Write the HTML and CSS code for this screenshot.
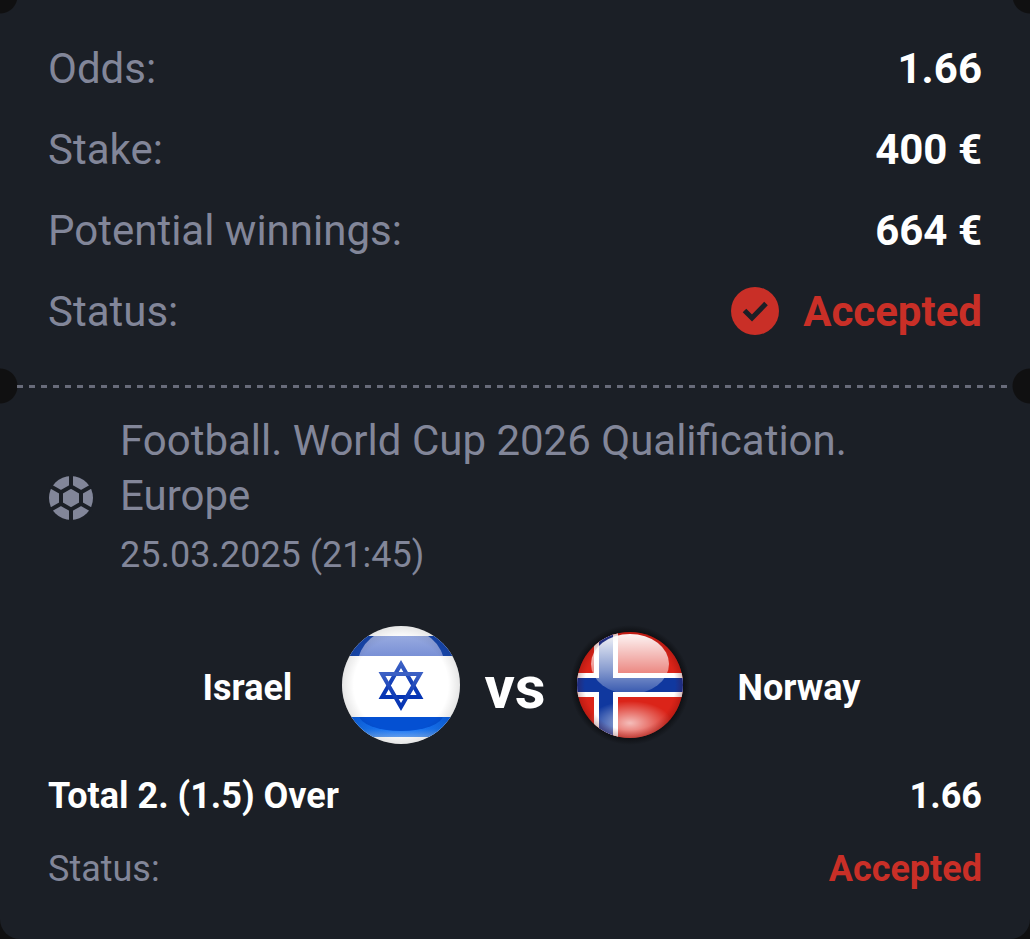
FILE: index.html
```html
<!DOCTYPE html>
<html lang="en">
<head>
  <meta charset="UTF-8">
  <meta name="viewport" content="width=device-width, initial-scale=1">
  <title>Bet slip</title>
  <link rel="stylesheet" href="styles.css">
</head>
<body>
  <main class="ticket">
    <section class="summary">
      <dl class="summary-list">
        <div class="row">
          <dt>Odds:</dt>
          <dd>1.66</dd>
        </div>
        <div class="row">
          <dt>Stake:</dt>
          <dd>400 €</dd>
        </div>
        <div class="row">
          <dt>Potential winnings:</dt>
          <dd>664 €</dd>
        </div>
        <div class="row">
          <dt>Status:</dt>
          <dd class="accepted">
            <svg class="check" viewBox="0 0 48 48" aria-hidden="true">
              <circle cx="24" cy="24" r="24" fill="#c92f27"/>
              <path d="M13.500 23.500 L21 31 L35 16.500" fill="none" stroke="#1b1f26" stroke-width="5"/>
            </svg>
            Accepted
          </dd>
        </div>
      </dl>
    </section>

    <div class="divider"></div>

    <section class="event">
      <header class="event-header">
        <svg class="ball" viewBox="-23 -23 46 46" aria-hidden="true">
          <circle r="22" fill="#828699"/>
          <g fill="#828699" stroke="#1b1f26" stroke-width="4">
            <path d="M0 -11.500 L10 -5.750 L10 5.750 L0 11.500 L-10 5.750 L-10 -5.750 Z"/>
            <path d="M0 -11.500 V-24 M10 -5.750 L21 -12 M10 5.750 L21 12 M0 11.500 V24 M-10 5.750 L-21 12 M-10 -5.750 L-21 -12"/>
          </g>
        </svg>
        <div>
          <h1 class="league">Football. World Cup 2026 Qualification. Europe</h1>
          <time class="date" datetime="2025-03-25T21:45">25.03.2025 (21:45)</time>
        </div>
      </header>

      <div class="match">
        <div class="team team-home">
          <span class="team-name">Israel</span>
          <svg class="flag" viewBox="0 0 120 120" role="img" aria-label="Flag of Israel">
            <defs>
              <clipPath id="homeClip"><circle cx="61" cy="60" r="59"/></clipPath>
              <clipPath id="homeTop"><rect y="11" width="120" height="20"/></clipPath>
              <clipPath id="homeBottom"><rect y="92" width="120" height="20"/></clipPath>
              <radialGradient id="homeShade">
                <stop offset="0.800" stop-color="#000" stop-opacity="0"/>
                <stop offset="1" stop-color="#000" stop-opacity="0.100"/>
              </radialGradient>
              <linearGradient id="homeGloss" x1="0" y1="0" x2="0" y2="1">
                <stop offset="0" stop-color="#a3b4e4"/>
                <stop offset="0.500" stop-color="#6d86d2"/>
              </linearGradient>
              <linearGradient id="homeBand" x1="0" y1="0" x2="0" y2="1">
                <stop offset="0" stop-color="#0b5fe0"/>
                <stop offset="0.600" stop-color="#1673f2"/>
                <stop offset="1" stop-color="#62a0f4"/>
              </linearGradient>
              <linearGradient id="homeStar" x1="0" y1="0" x2="0" y2="1">
                <stop offset="0" stop-color="#3c60c4"/>
                <stop offset="0.500" stop-color="#1742b8"/>
                <stop offset="1" stop-color="#0534b4"/>
              </linearGradient>
            </defs>
            <g clip-path="url(#homeClip)">
              <rect width="120" height="120" fill="#fff"/>
              <rect y="11" width="120" height="20" fill="#1747ae"/>
              <g clip-path="url(#homeTop)">
                <ellipse cx="61" cy="39" rx="43" ry="36" fill="url(#homeGloss)"/>
              </g>
              <rect y="92" width="120" height="20" fill="url(#homeBand)"/>
              <g clip-path="url(#homeBottom)">
                <ellipse cx="61" cy="90" rx="42" ry="16" fill="#0450d2"/>
              </g>
              <g fill="none" stroke="url(#homeStar)" stroke-width="4">
                <path d="M61 39 L80 72 H42 Z"/>
                <path d="M61 82 L42 49 H80 Z"/>
              </g>
              <circle cx="61" cy="60" r="59" fill="url(#homeShade)"/>
            </g>
          </svg>
        </div>
        <strong class="versus">vs</strong>
        <div class="team team-away">
          <svg class="flag" viewBox="0 0 120 120" role="img" aria-label="Flag of Norway">
            <defs>
              <clipPath id="awayClip"><circle cx="60" cy="60" r="53"/></clipPath>
              <radialGradient id="awayShadow">
                <stop offset="0.850" stop-color="#0b0c0f"/>
                <stop offset="1" stop-color="#0b0c0f" stop-opacity="0"/>
              </radialGradient>
              <radialGradient id="awayShade">
                <stop offset="0.850" stop-color="#700" stop-opacity="0"/>
                <stop offset="1" stop-color="#500" stop-opacity="0.250"/>
              </radialGradient>
              <linearGradient id="awayGloss" x1="0" y1="0" x2="0" y2="1">
                <stop offset="0" stop-color="#fff" stop-opacity="0.950"/>
                <stop offset="0.600" stop-color="#fff" stop-opacity="0.500"/>
                <stop offset="1" stop-color="#fff" stop-opacity="0.150"/>
              </linearGradient>
              <radialGradient id="awayGlow">
                <stop offset="0" stop-color="#fff" stop-opacity="0.700"/>
                <stop offset="1" stop-color="#fff" stop-opacity="0"/>
              </radialGradient>
            </defs>
            <circle cx="60" cy="60" r="60" fill="url(#awayShadow)"/>
            <g clip-path="url(#awayClip)">
              <rect width="120" height="120" fill="#db2419"/>
              <path d="M24 0 H48 V120 H24 Z M0 48 H120 V72 H0 Z" fill="#fff"/>
              <path d="M29 0 H43 V120 H29 Z M0 53 H120 V67 H0 Z" fill="#10389f"/>
              <ellipse cx="60" cy="98" rx="42" ry="22" fill="url(#awayGlow)"/>
              <circle cx="60" cy="60" r="53" fill="url(#awayShade)"/>
              <ellipse cx="60" cy="39" rx="39" ry="30" fill="url(#awayGloss)"/>
            </g>
          </svg>
          <span class="team-name">Norway</span>
        </div>
      </div>

      <div class="row row-market">
        <span>Total 2. (1.5) Over</span>
        <span>1.66</span>
      </div>
      <div class="row row-status">
        <span>Status:</span>
        <strong class="accepted">Accepted</strong>
      </div>
    </section>
  </main>
</body>
</html>
```
FILE: styles.css
```css
* {
  box-sizing: border-box;
}

body {
  margin: 0;
  background-color: #101011;
  color: #fff;
  font-family: Roboto, "Liberation Sans", sans-serif;
}

.ticket {
  min-height: 100vh;
  background:
    radial-gradient(circle at 0 -4px, #101011 17px, transparent 18px),
    radial-gradient(circle at 100% -4px, #101011 17px, transparent 18px),
    #1b1f26;
  border-radius: 0 0 20px 20px;
}

.summary {
  padding: 44px 48px 31px;
}

.summary-list {
  display: flex;
  flex-direction: column;
  gap: 31px;
  margin: 0;
}

.row {
  display: flex;
  align-items: center;
  justify-content: space-between;
  font-size: 42px;
  line-height: 50px;
}

.row dt {
  color: #828699;
}

.row dd {
  display: flex;
  align-items: center;
  gap: 24px;
  margin: 0;
  font-weight: bold;
}

.row .accepted {
  color: #c92f27;
}

.check {
  width: 48px;
  height: 48px;
  margin-bottom: 2px;
}

/* perforation with the two side notches */
.divider {
  height: 36px;
  padding: 0 17px;
  background:
    radial-gradient(circle at 0 50%, #101011 17px, transparent 18px),
    radial-gradient(circle at 100% 50%, #101011 17px, transparent 18px);
}

.divider::before {
  content: "";
  display: block;
  height: 100%;
  background: repeating-linear-gradient(90deg, #686b7a 0 6px, transparent 6px 12px) center / 100% 3px no-repeat;
}

.event {
  padding: 9px 48px 36px;
}

.event-header {
  display: flex;
  align-items: center;
  gap: 26px;
  color: #828699;
}

.ball {
  flex: none;
  width: 46px;
  height: 46px;
}

.league {
  margin: 0;
  font-size: 42px;
  font-weight: normal;
  line-height: 55px;
}

.date {
  display: block;
  margin-top: 4px;
  font-size: 36px;
  line-height: 56px;
}

.match {
  display: flex;
  align-items: center;
  gap: 24px;
  margin-top: 42px;
}

.team {
  display: flex;
  flex: 1;
  align-items: center;
  gap: 48px;
  font-size: 36px;
  font-weight: bold;
}

.team-home {
  justify-content: flex-end;
}

.team-name {
  padding-top: 6px;
}

.flag {
  flex: none;
  width: 120px;
  height: 120px;
}

.versus {
  padding-top: 6px;
  font-size: 60px;
  line-height: 60px;
}

.row-market {
  margin-top: 26px;
  font-size: 36px;
  font-weight: bold;
}

.row-status {
  margin-top: 23px;
  color: #828699;
  font-size: 36px;
}
```
